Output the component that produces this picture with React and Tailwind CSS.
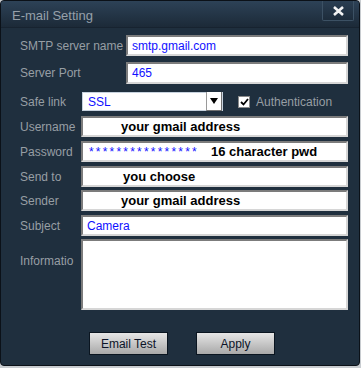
import React from "react";

const font = { fontFamily: '"Liberation Sans", Arial, sans-serif' };

const boxCls =
  "bg-white border-2 border-t-[#7c7c7c] border-l-[#7c7c7c] border-b-[#d6d6d6] border-r-[#d6d6d6]";

const Label = ({ children, w = "w-[61px]" }) => (
  <span className={`${w} shrink-0 text-[12px] text-[#979ea4] whitespace-nowrap overflow-hidden`}>
    {children}
  </span>
);

// Plain field with an optional hint written in bold black
const Field = ({ label, labelW, boxW, h, mt, children }) => (
  <div className={`flex items-center ${mt}`}>
    <Label w={labelW}>{label}</Label>
    <div className={`${boxW} ${h} ${boxCls} flex items-center px-1`}>{children}</div>
  </div>
);

export default function App() {
  return (
    <div style={font} className="w-[361px] h-[368px] bg-[#c8ccd0]">
      <div className="w-[360px] h-[366px] bg-[#1f2f3e] border border-[#0b1118] rounded-[4px] overflow-hidden flex flex-col">
        {/* title bar */}
        <div className="h-[27px] shrink-0 flex items-start justify-between bg-gradient-to-b from-[#2d4257] to-[#1c2a38] border-b border-[#172330]">
          <span className="ml-[11px] mt-[5px] text-[13px] text-[#96a0aa]">E-mail Setting</span>
          <div className="mr-[5px] w-[32px] h-[20px] flex items-center justify-center bg-gradient-to-b from-[#2a3e52] to-[#1d2c3b] border border-t-0 border-[#3c5164] rounded-b-[2px]">
            <svg width="11" height="10" viewBox="0 0 11 10">
              <path d="M1 1 L10 9 M10 1 L1 9" stroke="#f2f2f2" strokeWidth="2.6" />
            </svg>
          </div>
        </div>

        <div className="pl-[19px] flex flex-col">
          <Field label="SMTP server name" labelW="w-[106px]" boxW="w-[222px]" h="h-[21px]" mt="mt-[7px]">
            <span className="text-[12px] text-[#1010ff]">smtp.gmail.com</span>
          </Field>
          <Field label="Server Port" labelW="w-[106px]" boxW="w-[222px]" h="h-[22px]" mt="mt-[6px]">
            <span className="text-[12px] text-[#1010ff]">465</span>
          </Field>

          {/* safe link row */}
          <div className="flex items-center mt-[8px]">
            <Label w="w-[62px]">Safe link</Label>
            <div className="w-[141px] h-[19px] bg-white border border-[#c7d2de] flex items-center">
              <span className="flex-1 pl-[5px] text-[12px] text-[#1010ff]">SSL</span>
              <div className="w-[16px] h-[19px] bg-white border-l border-[#9a9a9a] border-r border-b border-r-[#707070] border-b-[#707070] flex items-center justify-center">
                <svg width="8" height="6" viewBox="0 0 8 6">
                  <path d="M0 0 H8 L4 6 Z" fill="#000" />
                </svg>
              </div>
            </div>
            <div className="ml-[15px] w-[12px] h-[12px] bg-white border border-[#8a8a8a] flex items-center justify-center">
              <svg width="9" height="8" viewBox="0 0 9 8">
                <path d="M1 4 L3.5 6.5 L8 1" stroke="#000" strokeWidth="1.8" fill="none" />
              </svg>
            </div>
            <span className="ml-[6px] text-[12px] text-[#979ea4]">Authentication</span>
          </div>

          <Field label="Username" boxW="w-[267px]" h="h-[21px]" mt="mt-[5px]">
            <b className="ml-[34px] text-[13px] text-black">your gmail address</b>
          </Field>
          <Field label="Password" boxW="w-[267px]" h="h-[21px]" mt="mt-[4px]">
            <span className="ml-[2px] text-[12px] text-[#1010ff] tracking-[2.2px]">****************</span>
            <b className="ml-[12px] text-[13px] text-black">16 character pwd</b>
          </Field>
          <Field label="Send to" boxW="w-[267px]" h="h-[21px]" mt="mt-[4px]">
            <b className="ml-[36px] text-[13px] text-black">you choose</b>
          </Field>
          <Field label="Sender" boxW="w-[267px]" h="h-[21px]" mt="mt-[3px]">
            <b className="ml-[34px] text-[13px] text-black">your gmail address</b>
          </Field>
          <Field label="Subject" boxW="w-[267px]" h="h-[21px]" mt="mt-[4px]">
            <span className="text-[12px] text-[#1010ff]">Camera</span>
          </Field>

          <div className="flex items-start mt-[3px]">
            <div className="w-[61px] pt-[9px]">
              <Label>Informatio</Label>
            </div>
            <div className={`w-[267px] h-[71px] ${boxCls}`} />
          </div>

          <div className="flex mt-[22px] pl-[69px] gap-[28px]">
            <button className="w-[79px] h-[23px] border border-[#0a1520] bg-gradient-to-b from-[#e6e6e6] to-[#a9a9a9] text-[12px] text-[#0c1428]">
              Email Test
            </button>
            <button className="w-[79px] h-[23px] border border-[#0a1520] bg-gradient-to-b from-[#e6e6e6] to-[#a9a9a9] text-[12px] text-[#0c1428]">
              Apply
            </button>
          </div>
        </div>
      </div>
    </div>
  );
}
